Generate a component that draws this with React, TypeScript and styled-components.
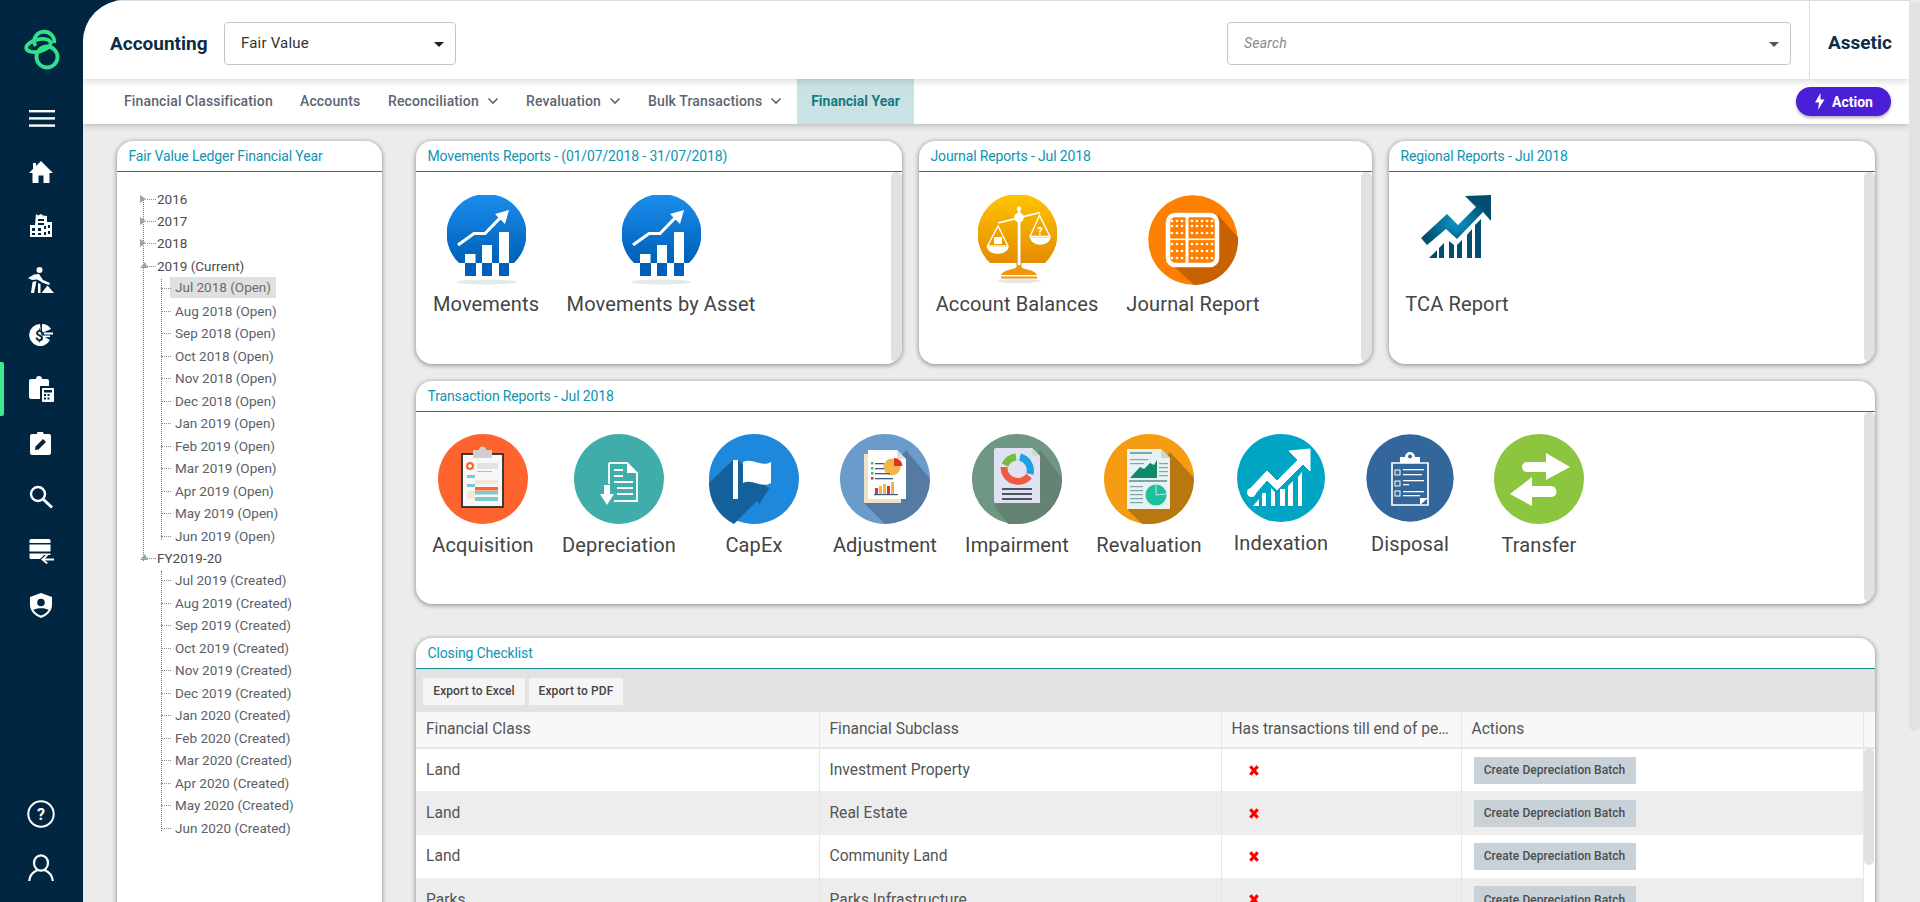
import React from "react";
import styled, { createGlobalStyle } from "styled-components";

const GlobalStyle = createGlobalStyle`
  html, body {
    margin: 0;
    padding: 0;
    height: 902px;
    overflow: hidden;
    background: #ececec;
    font-family: Roboto, "Liberation Sans", sans-serif;
  }
  * { box-sizing: border-box; }
`;

const Shell = styled.div`
  display: flex;
  width: 1920px;
  height: 902px;
  background: #012641;
  overflow: hidden;
  position: relative;
`;

const Sidebar = styled.aside`
  width: 83px;
  height: 902px;
  flex-shrink: 0;
  padding: 28px 0 7px;
  display: flex;
  flex-direction: column;
  align-items: center;
`;

const LogoBox = styled.div`
  width: 36px;
  height: 42px;
  margin: 0 0 21px 1px;
`;

const SideItem = styled.div<{ $active?: boolean; $shift?: number }>`
  position: relative;
  width: 83px;
  height: 54.2px;
  flex-shrink: 0;
  display: flex;
  align-items: center;
  justify-content: center;
  padding-right: ${(p) => 2 - (p.$shift || 0)}px;
  &::before {
    content: "";
    display: ${(p) => (p.$active ? "block" : "none")};
    position: absolute;
    left: 0;
    top: 0;
    width: 4px;
    height: 54px;
    border-radius: 0 2px 2px 0;
    background: #3fe98f;
  }
`;

const SideSpacer = styled.div`
  flex: 1;
`;

const Main = styled.div`
  flex: 1;
  height: 902px;
  background: #ececec;
  border-top-left-radius: 42px;
  overflow: hidden;
  position: relative;
`;

const PageScroll = styled.div`
  position: absolute;
  right: 0;
  top: 3px;
  width: 11px;
  height: 728px;
  background: #e2e2e2;
  border-radius: 0 0 6px 6px;
  z-index: 5;
`;

const Header = styled.header`
  position: relative;
  z-index: 3;
  width: 1826px;
  height: 79px;
  background: #fff;
  border-top: 1px solid #dcdcdc;
  box-shadow: 0 2px 8px rgba(0, 0, 0, 0.16);
  display: flex;
  align-items: center;
  padding: 6px 0 0 27px;
`;

const AppTitle = styled.div`
  font-size: 19px;
  font-weight: 700;
  color: #0d2c45;
  width: 114px;
`;

const SelectBox = styled.div<{ $w: number }>`
  width: ${(p) => p.$w}px;
  height: 43px;
  border: 1px solid #c6c6c6;
  border-radius: 4px;
  display: flex;
  align-items: center;
  justify-content: space-between;
  padding: 0 11px 0 16px;
  font-size: 15px;
  letter-spacing: 0.2px;
  color: #333;
`;

const SearchText = styled.span`
  font-style: italic;
  font-size: 14px;
  letter-spacing: 0.2px;
  color: #8a8a8a;
`;

const Caret = styled.span<{ $color: string }>`
  width: 0;
  height: 0;
  margin-top: 2px;
  border-left: 5px solid transparent;
  border-right: 5px solid transparent;
  border-top: 5px solid ${(p) => p.$color};
`;

const HeaderSpacer = styled.div`
  width: 771px;
`;

const OrgName = styled.div`
  margin: -6px 0 0 18px;
  border-left: 1px solid #dcdcdc;
  height: 78px;
  padding-left: 18px;
  width: 83px;
  line-height: 84px;
  font-size: 19px;
  font-weight: 700;
  color: #0d2c45;
  white-space: nowrap;
`;

const NavBar = styled.nav`
  position: relative;
  z-index: 2;
  width: 1826px;
  height: 45px;
  background: #fff;
  box-shadow: 0 2px 6px rgba(0, 0, 0, 0.2);
  display: flex;
  align-items: stretch;
  padding-left: 41px;
`;

const NavItem = styled.div<{ $w: number }>`
  width: ${(p) => p.$w}px;
  display: flex;
  align-items: center;
  padding-bottom: 2px;
  font-size: 14px;
  font-weight: 500;
  letter-spacing: 0.14px;
  color: #5c6673;
  white-space: nowrap;
  svg {
    margin-left: 8px;
    margin-top: 1px;
  }
`;

const NavTab = styled.div`
  width: 117px;
  display: flex;
  align-items: center;
  justify-content: center;
  padding-bottom: 2px;
  background: #c9e3e4;
  font-size: 14px;
  font-weight: 700;
  color: #16797e;
`;

const ActionButton = styled.button`
  position: absolute;
  left: 1713px;
  top: 8px;
  width: 95px;
  height: 29px;
  border: 0;
  border-radius: 15px;
  background: #4a1fd6;
  box-shadow: 0 2px 3px rgba(0, 0, 0, 0.3);
  color: #fff;
  font-family: inherit;
  font-size: 14px;
  font-weight: 700;
  display: flex;
  align-items: center;
  justify-content: center;
  gap: 7px;
  padding: 0 0 0 1px;
`;

const Content = styled.div`
  position: relative;
  display: flex;
  gap: 34px;
  padding: 17px 0 0 34px;
  height: 778px;
`;

const Panel = styled.section<{ $w: number; $h: number }>`
  width: ${(p) => p.$w}px;
  height: ${(p) => p.$h}px;
  flex-shrink: 0;
  background: #fff;
  border-radius: 16px;
  box-shadow: 0 1px 4px 1px rgba(0, 0, 0, 0.32);
  overflow: hidden;
  position: relative;
`;

const TreePanel = styled(Panel)`
  border-radius: 16px 16px 0 0;
`;

const PanelTitle = styled.h3`
  margin: 0;
  height: 31px;
  padding-left: 11.5px;
  line-height: 30px;
  font-size: 14px;
  font-weight: 400;
  letter-spacing: -0.14px;
  color: #0e93b3;
  border-bottom: 1px solid #15818f;
  white-space: nowrap;
`;

const PanelBody = styled.div<{ $top: number }>`
  display: flex;
  padding-top: ${(p) => p.$top}px;
`;

const ScrollTrack = styled.div`
  position: absolute;
  right: 0;
  top: 31px;
  bottom: 2px;
  width: 11px;
  background: #e1e1e1;
  border-radius: 5px;
`;

const Tile = styled.div<{ $w: number; $gap?: number }>`
  width: ${(p) => p.$w}px;
  flex-shrink: 0;
  display: flex;
  flex-direction: column;
  align-items: center;
  span {
    display: block;
    margin-top: ${(p) => p.$gap ?? 7}px;
    line-height: 24px;
    font-size: 20px;
    letter-spacing: 0.14px;
    color: #444;
    white-space: nowrap;
  }
`;

const RightColumn = styled.div`
  width: 1459px;
  flex-shrink: 0;
`;

const TopRow = styled.div`
  display: flex;
  gap: 17px;
  margin-bottom: 17px;
`;

const Stack = styled.div`
  margin-bottom: 34px;
`;

const Tree = styled.div`
  position: relative;
  padding: 15.5px 0 0 40px;
  font-size: 13.5px;
  color: #555;
`;

const TreeRow = styled.div<{ $child?: boolean }>`
  position: relative;
  height: 22.48px;
  line-height: 22.48px;
  white-space: nowrap;
  padding-left: ${(p) => (p.$child ? 18 : 0)}px;
  color: ${(p) => (p.$child ? "#5a6069" : "#4b4b4b")};
  &::before {
    content: "";
    position: absolute;
    top: 11px;
    left: ${(p) => (p.$child ? 4 : -10)}px;
    width: ${(p) => (p.$child ? 10 : 9)}px;
    border-top: 1px dotted #8a8a8a;
  }
`;

const Selected = styled.b`
  font-weight: 400;
  display: inline-block;
  background: #e0e0e0;
  margin-left: -5px;
  padding: 0 5px;
  height: 21px;
  line-height: 21px;
  color: #6a6a6a;
  vertical-align: top;
`;

const Expander = styled.i<{ $open?: boolean }>`
  position: absolute;
  left: -17px;
  top: 7px;
  width: 0;
  height: 0;
  ${(p) =>
    p.$open
      ? `border-left: 5px solid transparent; border-right: 3px solid transparent; border-bottom: 6px solid #a2a2a2;`
      : `border-top: 4px solid transparent; border-bottom: 4px solid transparent; border-left: 6px solid #a2a2a2;`}
`;

const TreeLine = styled.div<{ $x: number; $top: number; $h: number }>`
  position: absolute;
  left: ${(p) => p.$x}px;
  top: ${(p) => p.$top}px;
  height: ${(p) => p.$h}px;
  border-left: 1px dotted #777;
`;

const Toolbar = styled.div`
  height: 43px;
  background: #e2e2e2;
  display: flex;
  align-items: center;
  gap: 4px;
  padding: 0 0 0 7px;
`;

const ToolButton = styled.button<{ $w: number }>`
  width: ${(p) => p.$w}px;
  height: 27px;
  border: 0;
  background: #f5f5f5;
  color: #444;
  font-family: inherit;
  font-size: 12px;
  font-weight: 500;
  letter-spacing: 0.1px;
  padding: 0;
  margin-top: 1px;
`;

const Table = styled.table`
  width: 1459px;
  table-layout: fixed;
  border-collapse: collapse;
  font-size: 15.6px;
  color: #555;
`;

const HeadCell = styled.th<{ $w: number }>`
  width: ${(p) => p.$w}px;
  height: 36px;
  padding: 0 10px 2px;
  background: #f8f8f8;
  border-right: 1px solid #e6e6e6;
  border-bottom: 2px solid #e6e6e6;
  font-weight: 400;
  text-align: left;
  overflow: hidden;
  white-space: nowrap;
  text-overflow: ellipsis;
`;

const Row = styled.tr<{ $alt?: boolean }>`
  height: 43.4px;
  background: ${(p) => (p.$alt ? "#ededed" : "#fff")};
`;

const Cell = styled.td<{ $pad?: number }>`
  padding: 0 10px 0 ${(p) => p.$pad ?? 10}px;
  border-right: 1px solid #e6e6e6;
`;

const FillCell = styled.td`
  background: #fff;
`;

const BatchButton = styled.button`
  display: block;
  width: 162px;
  height: 27px;
  border: 0;
  background: #c8d0d8;
  color: #4d4d4d;
  font-family: inherit;
  font-size: 12px;
  font-weight: 500;
  letter-spacing: 0.06px;
  padding: 0;
`;

const TableScroll = styled.div`
  position: absolute;
  right: 1px;
  top: 110px;
  width: 10px;
  height: 117px;
  background: #e1e1e1;
  border-radius: 5px;
`;

const circleClip = "M12 68 A40 40 0 1 1 67 68 Z";

const MenuIcon = () => (
  <svg width="26" height="17" viewBox="0 0 26 17" fill="#fff">
    <rect width="26" height="2.4" />
    <rect y="7.2" width="26" height="2.4" />
    <rect y="14.4" width="26" height="2.4" />
  </svg>
);

const HomeIcon = () => (
  <svg width="24" height="22" viewBox="0 0 24 22" fill="#fff">
    <path d="M12 0 L24 12 L20.5 12 L20.5 22 L14.5 22 L14.5 14.5 L9.5 14.5 L9.5 22 L3.5 22 L3.5 12 L0 12 L4 8 L4 2 L7 2 L7 5 Z" />
  </svg>
);

const BuildingIcon = () => (
  <svg width="24" height="24" viewBox="0 0 24 24" fill="#fff">
    <path
      fillRule="evenodd"
      d="M7 0 L9 1.5 L12 0 L14 1.5 L18 2 L18 8 L23 8 L23 23 L1 23 L1 11 L6 11 Z M9 5 L9 7 L15 7 L15 5 Z M9 9 L9 11 L15 11 L15 9 Z M3 14 L3 17 L6 17 L6 14 Z M9 14 L9 17 L12 17 L12 14 Z M15 12 L15 15 L17 15 L17 12 Z M19 11 L19 14 L21 14 L21 11 Z M3 19 L3 21 L6 21 L6 19 Z M9 19 L9 21 L12 21 L12 19 Z M15 18 L15 21 L17 21 L17 18 Z M19 17 L19 20 L21 20 L21 17 Z"
    />
  </svg>
);

const WorkerIcon = () => (
  <svg width="26" height="27" viewBox="0 0 26 27" fill="#fff">
    <circle cx="11.5" cy="3" r="3" />
    <path d="M0 11 L6 7.5 L11 7 L15 13 L22 16 L21 18 L14 15.5 L12 14 L9 12.5 L4 13 Z" />
    <path d="M4.5 15 L8.5 14 L6 26 L3 26 Z" />
    <path d="M10 16 L12.5 17 L12.5 26 L10 26 Z" />
    <path d="M13.5 26 L19.5 18.5 L26 26 Z" />
  </svg>
);

const MoneyIcon = () => (
  <svg width="24" height="24" viewBox="0 0 24 24">
    <path d="M11 1 A11 11 0 1 0 21 17 L12.5 12 Z M13 1 L13 10 L22 6 A11 11 0 0 0 13 1 Z" fill="#fff" />
    <rect x="15" y="9.5" width="9" height="2" fill="#fff" />
    <rect x="14" y="12.5" width="7" height="1.6" fill="#fff" />
    <text x="6" y="17.5" fontSize="15" fontWeight="700" fontFamily="Roboto" fill="#012641">
      $
    </text>
  </svg>
);

const LedgerIcon = () => (
  <svg width="25" height="26" viewBox="0 0 25 26">
    <path d="M2 3 L7 3 A3 3 0 0 1 13 3 L18 3 A2 2 0 0 1 20 5 L20 10 L11 10 L11 23 L2 23 A2 2 0 0 1 0 21 L0 5 A2 2 0 0 1 2 3 Z" fill="#fff" />
    <rect x="13" y="12" width="12" height="14" rx="1" fill="#fff" />
    <rect x="15" y="14" width="8" height="2.5" fill="#012641" />
    <rect x="15" y="18" width="2" height="2" fill="#012641" />
    <rect x="18.5" y="18" width="2" height="2" fill="#012641" />
    <rect x="15" y="21.5" width="2" height="2" fill="#012641" />
    <rect x="18.5" y="21.5" width="2" height="2" fill="#012641" />
  </svg>
);

const TaskIcon = () => (
  <svg width="21" height="23" viewBox="0 0 21 23">
    <path d="M2 2 L7 2 A3.2 3.2 0 0 1 13.5 2 L19 2 A2 2 0 0 1 21 4 L21 21 A2 2 0 0 1 19 23 L2 23 A2 2 0 0 1 0 21 L0 4 A2 2 0 0 1 2 2 Z" fill="#fff" />
    <path d="M5 18 L5.5 14.5 L13 7 L16 10 L8.5 17.5 Z" fill="#012641" />
  </svg>
);

const SearchIcon = () => (
  <svg width="24" height="24" viewBox="0 0 24 24" fill="none" stroke="#fff">
    <circle cx="9" cy="9" r="7" strokeWidth="2.4" />
    <path d="M14.5 14.5 L23 22.5" strokeWidth="3" />
  </svg>
);

const DataIcon = () => (
  <svg width="25" height="25" viewBox="0 0 25 25" fill="#fff">
    <path d="M2 0 L20 0 A1.5 1.5 0 0 1 21.5 1.5 L21.5 4 L0.5 4 L0.5 1.5 A1.5 1.5 0 0 1 2 0 Z" />
    <rect x="0.5" y="5.5" width="21" height="7" />
    <path d="M0.5 14.5 L21.5 14.5 L21.5 16 L15 16 L11 20 L2 20 A1.5 1.5 0 0 1 0.5 18.5 Z" />
    <path d="M25 19.5 L16 19.5 L19 16.5 L17.5 15.5 L12 20.5 L17.5 25 L19 24 L16 21.5 L25 21.5 Z" />
  </svg>
);

const ShieldIcon = () => (
  <svg width="22" height="25" viewBox="0 0 22 25">
    <path d="M11 0 L22 4 L22 12 C22 18 17 23 11 25 C5 23 0 18 0 12 L0 4 Z" fill="#fff" />
    <circle cx="11" cy="9.5" r="3.8" fill="#012641" />
    <path d="M3.5 17 C6 14.5 16 14.5 18.5 17 C16.5 20 14 21.5 11 22.5 C8 21.5 5.5 20 3.5 17 Z" fill="#012641" />
  </svg>
);

const HelpIcon = () => (
  <svg width="28" height="28" viewBox="0 0 28 28" fill="none">
    <ellipse cx="14" cy="14" rx="12.7" ry="12.8" stroke="#fff" strokeWidth="2" />
    <text x="14" y="20" textAnchor="middle" fontSize="16" fontWeight="700" fontFamily="Roboto" fill="#fff">
      ?
    </text>
  </svg>
);

const UserIcon = () => (
  <svg width="26" height="28" viewBox="0 0 26 28" fill="none" stroke="#fff" strokeWidth="2.2">
    <ellipse cx="13" cy="9" rx="7" ry="7.7" />
    <path d="M1.2 27 C2 20 7 17 9.5 16 M24.8 27 C24 20 19 17 16.5 16" />
  </svg>
);

const LogoIcon = () => (
  <svg width="36" height="42" viewBox="0 0 36 42" fill="none" stroke="#30e08b" strokeWidth="3.8">
    <circle cx="23" cy="29" r="10.5" />
    <path d="M11.5 18 A10 9.5 0 1 1 30 15" />
    <ellipse cx="14.5" cy="17.5" rx="12.5" ry="6" transform="rotate(-14 14.5 17.5)" />
  </svg>
);

const Chevron = () => (
  <svg width="12" height="8" viewBox="0 0 12 8" fill="none" stroke="#5c6673" strokeWidth="1.6">
    <path d="M1.5 1.5 L6 6 L10.5 1.5" />
  </svg>
);

const BoltIcon = () => (
  <svg width="10" height="17" viewBox="0 0 10 17" fill="#fff">
    <path d="M5.5 0 L0 9.5 L4 9.5 L3 17 L9.5 6.5 L5.5 6.5 Z" />
  </svg>
);

const RedCross = () => (
  <svg width="10" height="11" viewBox="0 0 10 11" stroke="#f00" strokeWidth="3.2" style={{ display: "block" }}>
    <path d="M1.3 1.3 L8.7 9.7 M8.7 1.3 L1.3 9.7" />
  </svg>
);

const GlobeShadow = () => <ellipse cx="39.5" cy="87" rx="30" ry="2.5" fill="#e8e8e8" />;

const MovementsIcon = () => (
  <svg width="79" height="90" viewBox="0 0 79 90">
    <defs>
      <linearGradient id="mv" x1="0" y1="0" x2="0" y2="1">
        <stop offset="0" stopColor="#1a8dee" />
        <stop offset="1" stopColor="#0060b6" />
      </linearGradient>
    </defs>
    <GlobeShadow />
    <path d={circleClip} fill="url(#mv)" />
    <rect x="18" y="68" width="11" height="13" fill="#0060b6" />
    <rect x="35" y="68" width="10" height="13" fill="#0060b6" />
    <rect x="52" y="68" width="10" height="13" fill="#0060b6" />
    <rect x="18" y="59" width="10.5" height="9" fill="#fff" />
    <rect x="35" y="50" width="10" height="18" fill="#fff" />
    <rect x="52" y="37" width="10" height="31" fill="#fff" />
    <path d="M11 50 L27 38.5 L38 38.5 L54 22" stroke="#fff" strokeWidth="3.2" fill="none" />
    <path d="M48 19 L62 15 L58 29 Z" fill="#fff" />
  </svg>
);

const BalanceIcon = () => (
  <svg width="79" height="90" viewBox="0 0 79 90">
    <defs>
      <linearGradient id="bal" x1="0" y1="0" x2="0" y2="1">
        <stop offset="0" stopColor="#ffc400" />
        <stop offset="1" stopColor="#e58c00" />
      </linearGradient>
    </defs>
    <ellipse cx="41" cy="86" rx="22" ry="2" fill="#e6e6e6" />
    <path d={circleClip} fill="url(#bal)" />
    <path d="M23 80 C26 74 36 75 38.5 72 L38.5 68 L43.5 68 L43.5 72 C46 75 56 74 59 80 Z" fill="#f0980d" />
    <rect x="23" y="81.5" width="36" height="2" fill="#f0980d" />
    <rect x="39.7" y="14" width="2.8" height="56" fill="#fff" />
    <circle cx="41" cy="13.5" r="2.2" fill="#fff" />
    <circle cx="41" cy="22.5" r="4.8" fill="#fff" />
    <path d="M20 28 L62 17.5" stroke="#fff" strokeWidth="1.8" />
    <path d="M20 31 L9.5 51 L30 51 Z M61.5 20.5 L52 41.5 L72 41.5 Z" fill="none" stroke="#fff" strokeWidth="1.4" />
    <path d="M9 52 L30.5 52 C29.5 61 10 61 9 52 Z M52 42.5 L72.5 42.5 C71.5 52 53 52 52 42.5 Z" fill="#fff" />
    <rect x="16" y="42" width="8" height="7" fill="#fff" />
    <text x="62" y="40" textAnchor="middle" fontSize="11" fontWeight="700" fontFamily="Roboto" fill="#fff">
      ?
    </text>
  </svg>
);

const AbacusIcon = () => {
  const rows = [26, 31, 38, 49, 56, 63];
  const cols = [24, 29, 34, 44, 49, 54, 59, 64];
  return (
    <svg width="90" height="90" viewBox="0 0 90 90">
      <circle cx="45" cy="45" r="44.7" fill="#ff8000" />
      <path d="M22 68 L70 20 L90 42 A45 45 0 0 1 46 90 Z" fill="#c86200" />
      <rect x="20" y="20" width="49" height="50" rx="7" fill="#ff8000" stroke="#fff" strokeWidth="4.5" />
      <rect x="37.5" y="20" width="3" height="50" fill="#fff" />
      <rect x="20" y="43.5" width="49" height="1.6" fill="#fff" />
      {rows.map((y) =>
        cols.map((x) => <circle key={`${x}-${y}`} cx={x} cy={y} r="1.35" fill="#fff" />)
      )}
    </svg>
  );
};

const TcaIcon = () => (
  <svg width="72" height="90" viewBox="0 0 72 90">
    <defs>
      <radialGradient id="tca" cx="0.5" cy="0.55" r="0.5">
        <stop offset="0" stopColor="#0c96c6" />
        <stop offset="1" stopColor="#014e71" />
      </radialGradient>
    </defs>
    <path d="M0 43 L26 19 L37 30 L55 12 L44 1 L70 0 L70 26 L62 17 L36 44 L25 34 L6 50 Z" fill="url(#tca)" />
    <path d="M8 63 L16 55 L16 63 Z M18 53 L23 48 L23 63 L18 63 Z M28 46 L33 50 L33 63 L28 63 Z M36 50 L41 45 L41 63 L36 63 Z M46 40 L51 34 L51 63 L46 63 Z M54 30 L60 24 L60 63 L54 63 Z" fill="#014e71" />
  </svg>
);

const AcquisitionIcon = () => (
  <svg width="90" height="90" viewBox="0 0 90 90">
    <circle cx="45" cy="45" r="45" fill="#ff642e" />
    <rect x="24" y="20" width="41" height="53" fill="#f8f8f8" stroke="#2d2d2d" strokeWidth="1.8" />
    <rect x="35" y="16" width="19" height="8" rx="1" fill="#cfcfcf" />
    <circle cx="44.5" cy="16" r="3.5" fill="#cfcfcf" />
    <circle cx="32" cy="32" r="4" fill="#ff642e" />
    <rect x="30" y="31.2" width="4" height="1.6" fill="#fff" />
    <rect x="31.2" y="30" width="1.6" height="4" fill="#fff" />
    <rect x="39" y="29" width="21" height="6" fill="#e2e2e2" />
    <rect x="39" y="37" width="15" height="1" fill="#bbb" />
    <rect x="29" y="41" width="8" height="3" fill="#7ac9cc" />
    <rect x="37" y="46" width="23" height="4" fill="#f0e8d8" />
    <rect x="29" y="50" width="8" height="3" fill="#7ac9cc" />
    <rect x="37" y="53" width="23" height="3.5" fill="#ff642e" />
    <rect x="37" y="57" width="23" height="3.5" fill="#7ac9cc" />
    <rect x="29" y="57" width="8" height="8" fill="#f0e8d8" />
    <rect x="37" y="63" width="23" height="4" fill="#7ac9cc" />
  </svg>
);

const DepreciationIcon = () => (
  <svg width="90" height="90" viewBox="0 0 90 90">
    <circle cx="45" cy="45" r="45" fill="#41adab" />
    <path d="M35 29 L53 29 L63 39 L63 67 L40 67" fill="none" stroke="#fff" strokeWidth="1.8" />
    <path d="M35 29 L35 50" stroke="#fff" strokeWidth="1.8" />
    <path d="M53 29 L53 39 L63 39 Z" fill="#fff" />
    <g stroke="#fff" strokeWidth="1.8">
      <path d="M40 36 L49 36 M40 42 L49 42 M40 48 L59 48 M43 54 L59 54 M43 60 L59 60" />
    </g>
    <path d="M30 51 L36 51 L36 60 L40 60 L33 71 L26 60 L30 60 Z" fill="#fff" />
  </svg>
);

const CapexIcon = () => (
  <svg width="90" height="90" viewBox="0 0 90 90">
    <circle cx="45" cy="45" r="45" fill="#1e88dc" />
    <path d="M0 49 L24 26 L60 55 L25 90 A45 45 0 0 1 0 49 Z" fill="#14609a" />
    <path d="M24 26 L29 26 L60 55 L50 70 Z" fill="#14609a" />
    <rect x="24" y="26" width="5" height="39" fill="#fff" />
    <path d="M34 28 C44 23 52 34 62 28 L62 49 C52 55 44 44 34 49 Z" fill="#fff" />
  </svg>
);

const AdjustmentIcon = () => (
  <svg width="90" height="90" viewBox="0 0 90 90">
    <circle cx="45" cy="45" r="45" fill="#6a9bcb" />
    <path d="M24 69 L66 16 L90 45 A45 45 0 0 1 45 90 Z" fill="#557aa4" />
    <rect x="24" y="20" width="37" height="49" fill="#efe0c8" />
    <path d="M28 16 L57 16 L66 25 L66 65 L28 65 Z" fill="#fff" />
    <path d="M57 16 L66 25 L57 25 Z" fill="#ddd" />
    <circle cx="52" cy="33" r="8.5" fill="#f2b64b" />
    <path d="M54 24 A8.5 8.5 0 0 1 62.5 32 L54 32 Z" fill="#e63024" />
    <g fill="#35c06a">
      <rect x="31" y="28" width="2.5" height="2.5" />
      <rect x="31" y="33" width="2.5" height="2.5" />
      <rect x="31" y="38" width="2.5" height="2.5" />
    </g>
    <rect x="31" y="43" width="2.5" height="2.5" fill="#e63024" />
    <g fill="#3e5a85">
      <rect x="35" y="29" width="9" height="1.3" />
      <rect x="35" y="34" width="9" height="1.3" />
      <rect x="35" y="39" width="15" height="1.3" />
      <rect x="35" y="44" width="18" height="1.3" />
      <rect x="34" y="60" width="24" height="1.2" />
    </g>
    <rect x="35" y="54" width="3" height="6" fill="#e63024" />
    <rect x="39" y="52" width="3" height="8" fill="#f2b64b" />
    <rect x="43" y="50" width="3" height="10" fill="#f2b64b" />
    <rect x="47" y="52" width="3" height="8" fill="#e63024" />
    <rect x="51" y="48" width="3" height="12" fill="#f2b64b" />
  </svg>
);

const ImpairmentIcon = () => (
  <svg width="90" height="90" viewBox="0 0 90 90">
    <circle cx="45" cy="45" r="45" fill="#709684" />
    <path d="M22 72 L68 16 L90 44 A45 45 0 0 1 45 90 L36 90 Z" fill="#648372" />
    <path d="M24 14 L60 14 L68 22 L68 67 A1.5 1.5 0 0 1 66 69 L24 69 A2 2 0 0 1 22 67 L22 16 A2 2 0 0 1 24 14 Z" fill="#e0e2f2" />
    <path d="M60 14 L68 22 L60 22 Z" fill="#c3e2cc" />
    <g fill="none" strokeWidth="7">
      <path d="M32 33 A14 14 0 0 0 57 42" stroke="#f05a42" />
      <path d="M33 31 A14 14 0 0 1 44 23" stroke="#74bb3e" />
      <path d="M48 23 A14 14 0 0 1 58 40" stroke="#1aa3e0" />
    </g>
    <g fill="#4e5568">
      <rect x="30" y="54" width="30" height="2" />
      <rect x="30" y="59" width="30" height="2" />
      <rect x="30" y="64" width="30" height="2" />
    </g>
  </svg>
);

const RevaluationIcon = () => (
  <svg width="90" height="90" viewBox="0 0 90 90">
    <circle cx="45" cy="45" r="45" fill="#f59c12" />
    <path d="M24 76 L66 18 L90 44 A45 45 0 0 1 45 90 L38 90 Z" fill="#b7780f" />
    <path d="M23 15 L57 15 L66 24 L66 75 L23 75 Z" fill="#e9f2f2" />
    <path d="M57 15 L66 24 L57 24 Z" fill="#cdd5d8" />
    <rect x="26" y="18" width="22" height="2" fill="#7fa5a8" />
    <rect x="26" y="25" width="18" height="1.2" fill="#7fa5a8" />
    <rect x="26" y="29" width="14" height="1.2" fill="#7fa5a8" />
    <path d="M26 44 L36 33 L40 35 L46 29 L50 31 L53 26 L53 44 Z" fill="#0f8a6c" />
    <g fill="#7fa5a8">
      <rect x="55" y="29" width="9" height="1.2" />
      <rect x="55" y="33" width="9" height="1.2" />
      <rect x="55" y="37" width="9" height="1.2" />
      <rect x="55" y="41" width="9" height="1.2" />
      <rect x="25" y="46" width="38" height="2" />
      <rect x="26" y="52" width="13" height="1.2" />
      <rect x="26" y="56" width="13" height="1.2" />
      <rect x="26" y="60" width="13" height="1.2" />
      <rect x="26" y="64" width="13" height="1.2" />
      <rect x="26" y="68" width="13" height="1.2" />
    </g>
    <circle cx="52" cy="61" r="10.5" fill="#1dbf9c" />
    <path d="M52 61 L52 51 M52 61 L62 60" stroke="#e9f2f2" strokeWidth="0.8" />
  </svg>
);

const IndexationIcon = () => (
  <svg width="90" height="88" viewBox="0 0 90 88">
    <circle cx="45" cy="44" r="44" fill="#00a5c4" />
    <path d="M13 56 L31 37 L41 47 L62 26 L53 17 L74 15 L74 37 L67 30 L41 56 L31 46 L18 61 Z" fill="#fff" stroke="#fff" strokeLinejoin="round" />
    <circle cx="15.5" cy="58.5" r="4.5" fill="#fff" />
    <g fill="#fff">
      <path d="M17 72 L23 65 L23 72 Z" />
      <rect x="26" y="59" width="4" height="13" />
      <path d="M35 54 L39 58 L39 72 L35 72 Z" />
      <rect x="44" y="55" width="5" height="17" />
      <path d="M52 52 L57 47 L57 72 L52 72 Z" />
      <path d="M62 43 L66 38 L66 72 L62 72 Z" />
    </g>
  </svg>
);

const DisposalIcon = () => (
  <svg width="88" height="88" viewBox="0 0 88 88">
    <circle cx="44" cy="44" r="43.7" fill="#33669a" />
    <path d="M26 29 L62 29 L62 71 L26 71 Z" fill="#33669a" stroke="#fff" strokeWidth="1.7" />
    <path d="M34 29 L34 23 L39 23 A5 5 0 0 1 49 23 L54 23 L54 29 Z" fill="#fff" />
    <circle cx="44" cy="22.5" r="2" fill="#33669a" />
    <g fill="none" stroke="#fff" strokeWidth="1">
      <rect x="29" y="36" width="5" height="5" />
      <rect x="29" y="47" width="5" height="5" />
      <rect x="29" y="57" width="5" height="5" />
    </g>
    <g fill="#fff">
      <rect x="37" y="35" width="21" height="1.3" />
      <rect x="37" y="40" width="19" height="1.3" />
      <rect x="37" y="46" width="21" height="1.3" />
      <rect x="37" y="50" width="6" height="1.3" />
      <rect x="37" y="57" width="21" height="1.3" />
      <rect x="37" y="61" width="17" height="1.3" />
      <path d="M54 71 L54 64 L62 64 Z" />
    </g>
  </svg>
);

const TransferIcon = () => (
  <svg width="90" height="90" viewBox="0 0 90 90">
    <circle cx="45" cy="45" r="45" fill="#8cc63f" />
    <path d="M33 28 L52 28 L52 19 L76 33 L52 46 L52 38 L33 38 A5 5 0 0 1 33 28 Z" fill="#fff" />
    <path d="M57 52 L38 52 L38 43 L16 60 L38 72 L38 63 L57 63 A5 5 0 0 0 57 52 Z" fill="#fff" />
  </svg>
);

const months = ["Jul", "Aug", "Sep", "Oct", "Nov", "Dec", "Jan", "Feb", "Mar", "Apr", "May", "Jun"];

const periods = (first: number, status: string) =>
  months.map((m, i) => `${m} ${i < 6 ? first : first + 1} (${status})`);

const transactionReports = [
  { label: "Acquisition", w: 134, gap: 8.5, icon: <AcquisitionIcon /> },
  { label: "Depreciation", w: 138, gap: 8.5, icon: <DepreciationIcon /> },
  { label: "CapEx", w: 132, gap: 8.5, icon: <CapexIcon /> },
  { label: "Adjustment", w: 130, gap: 8.5, icon: <AdjustmentIcon /> },
  { label: "Impairment", w: 134, gap: 8.5, icon: <ImpairmentIcon /> },
  { label: "Revaluation", w: 130, gap: 8.5, icon: <RevaluationIcon /> },
  { label: "Indexation", w: 134, gap: 9, icon: <IndexationIcon /> },
  { label: "Disposal", w: 124, gap: 10, icon: <DisposalIcon /> },
  { label: "Transfer", w: 134, gap: 8.5, icon: <TransferIcon /> },
];

const checklist = [
  ["Land", "Investment Property"],
  ["Land", "Real Estate"],
  ["Land", "Community Land"],
  ["Parks", "Parks Infrastructure"],
];

const App: React.FC = () => {
  return (
    <>
      <GlobalStyle />
      <Shell>
        <Sidebar>
          <LogoBox>
            <LogoIcon />
          </LogoBox>
          <SideItem $shift={3}><MenuIcon /></SideItem>
          <SideItem><HomeIcon /></SideItem>
          <SideItem><BuildingIcon /></SideItem>
          <SideItem><WorkerIcon /></SideItem>
          <SideItem><MoneyIcon /></SideItem>
          <SideItem $active $shift={2}><LedgerIcon /></SideItem>
          <SideItem><TaskIcon /></SideItem>
          <SideItem><SearchIcon /></SideItem>
          <SideItem $shift={2}><DataIcon /></SideItem>
          <SideItem><ShieldIcon /></SideItem>
          <SideSpacer />
          <SideItem><HelpIcon /></SideItem>
          <SideItem><UserIcon /></SideItem>
        </Sidebar>

        <Main>
          <PageScroll />
          <Header>
            <AppTitle>Accounting</AppTitle>
            <SelectBox $w={232}>
              Fair Value
              <Caret $color="#222" />
            </SelectBox>
            <HeaderSpacer />
            <SelectBox $w={564}>
              <SearchText>Search</SearchText>
              <Caret $color="#555" />
            </SelectBox>
            <OrgName>Assetic</OrgName>
          </Header>

          <NavBar>
            <NavItem $w={176}>Financial Classification</NavItem>
            <NavItem $w={88}>Accounts</NavItem>
            <NavItem $w={138}>Reconciliation <Chevron /></NavItem>
            <NavItem $w={122}>Revaluation <Chevron /></NavItem>
            <NavItem $w={149}>Bulk Transactions <Chevron /></NavItem>
            <NavTab>Financial Year</NavTab>
            <ActionButton>
              <BoltIcon />
              Action
            </ActionButton>
          </NavBar>

          <Content>
            <TreePanel $w={265} $h={800}>
              <PanelTitle>Fair Value Ledger Financial Year</PanelTitle>
              <Tree>
                <TreeLine $x={26} $top={27} $h={362} />
                <TreeLine $x={44} $top={107} $h={261} />
                <TreeLine $x={44} $top={399} $h={260} />
                {["2016", "2017", "2018"].map((y) => (
                  <TreeRow key={y}>
                    <Expander />
                    {y}
                  </TreeRow>
                ))}
                <TreeRow>
                  <Expander $open />
                  2019 (Current)
                </TreeRow>
                {periods(2018, "Open").map((p, i) => (
                  <TreeRow $child key={p}>
                    {i === 0 ? <Selected>{p}</Selected> : p}
                  </TreeRow>
                ))}
                <TreeRow>
                  <Expander $open />
                  FY2019-20
                </TreeRow>
                {periods(2019, "Created").map((p) => (
                  <TreeRow $child key={p}>
                    {p}
                  </TreeRow>
                ))}
              </Tree>
            </TreePanel>

            <RightColumn>
              <TopRow>
                <Panel $w={486} $h={223}>
                  <PanelTitle>Movements Reports - (01/07/2018 - 31/07/2018)</PanelTitle>
                  <PanelBody $top={23}>
                    <Tile $w={140}><MovementsIcon /><span>Movements</span></Tile>
                    <Tile $w={210}><MovementsIcon /><span>Movements by Asset</span></Tile>
                  </PanelBody>
                  <ScrollTrack />
                </Panel>
                <Panel $w={453} $h={223}>
                  <PanelTitle>Journal Reports - Jul 2018</PanelTitle>
                  <PanelBody $top={23}>
                    <Tile $w={196}><BalanceIcon /><span>Account Balances</span></Tile>
                    <Tile $w={156}><AbacusIcon /><span>Journal Report</span></Tile>
                  </PanelBody>
                  <ScrollTrack />
                </Panel>
                <Panel $w={486} $h={223}>
                  <PanelTitle>Regional Reports - Jul 2018</PanelTitle>
                  <PanelBody $top={23}>
                    <Tile $w={136}><TcaIcon /><span>TCA Report</span></Tile>
                  </PanelBody>
                  <ScrollTrack />
                </Panel>
              </TopRow>

              <Stack>
                <Panel $w={1459} $h={223}>
                  <PanelTitle>Transaction Reports - Jul 2018</PanelTitle>
                  <PanelBody $top={22}>
                    {transactionReports.map((r) => (
                      <Tile $w={r.w} $gap={r.gap} key={r.label}>
                        {r.icon}
                        <span>{r.label}</span>
                      </Tile>
                    ))}
                  </PanelBody>
                  <ScrollTrack />
                </Panel>
              </Stack>

              <Panel $w={1459} $h={400}>
                <PanelTitle>Closing Checklist</PanelTitle>
                <Toolbar>
                  <ToolButton $w={102}>Export to Excel</ToolButton>
                  <ToolButton $w={94}>Export to PDF</ToolButton>
                </Toolbar>
                <Table>
                  <thead>
                    <tr>
                      <HeadCell $w={403}>Financial Class</HeadCell>
                      <HeadCell $w={402}>Financial Subclass</HeadCell>
                      <HeadCell $w={240}>Has transactions till end of period</HeadCell>
                      <HeadCell $w={402}>Actions</HeadCell>
                      <HeadCell $w={12} />
                    </tr>
                  </thead>
                  <tbody>
                    {checklist.map(([cls, sub], i) => (
                      <Row $alt={i % 2 === 1} key={sub}>
                        <Cell>{cls}</Cell>
                        <Cell>{sub}</Cell>
                        <Cell $pad={27}>
                          <RedCross />
                        </Cell>
                        <Cell $pad={12}>
                          <BatchButton>Create Depreciation Batch</BatchButton>
                        </Cell>
                        <FillCell />
                      </Row>
                    ))}
                  </tbody>
                </Table>
                <TableScroll />
              </Panel>
            </RightColumn>
          </Content>
        </Main>
      </Shell>
    </>
  );
};

export default App;
